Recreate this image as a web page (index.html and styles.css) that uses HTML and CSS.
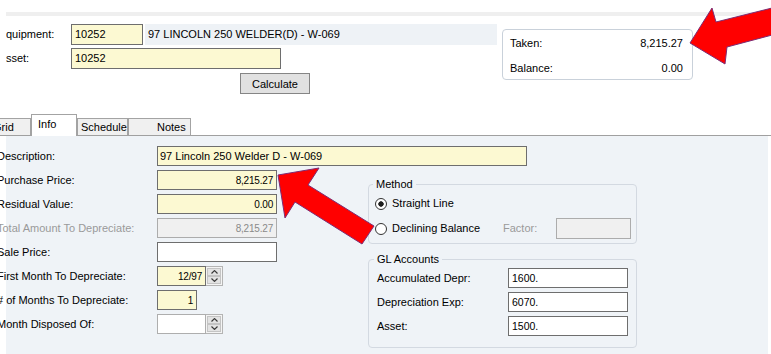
FILE: index.html
```html
<!DOCTYPE html>
<html>
<head>
<meta charset="utf-8">
<link rel="stylesheet" href="styles.css">
</head>
<body>
<div class="topband"></div>
<div class="header">
  <div class="hdr-left">
    <div class="hrow">
      <span class="hlabel">Equipment:</span>
      <div class="field yellow w72">10252</div>
      <div class="descband">97 LINCOLN 250 WELDER(D) - W-069</div>
    </div>
    <div class="hrow">
      <span class="hlabel">Asset:</span>
      <div class="field yellow w210">10252</div>
    </div>
    <div class="hrow btnrow">
      <button class="btn">Calculate</button>
    </div>
  </div>
  <div class="totals">
    <div class="trow"><span>Taken:</span><span>8,215.27</span></div>
    <div class="trow"><span>Balance:</span><span>0.00</span></div>
  </div>
</div>

<div class="tabs">
  <div class="tab tab-grid">Grid</div>
  <div class="tab tab-info active">Info</div>
  <div class="tab tab-sched">Schedule</div>
  <div class="tab tab-notes">Notes</div>
</div>

<div class="panel">
  <div class="lform">
    <span class="lbl">Description:</span>
    <div class="field yellow wdesc">97 Lincoln 250 Welder D - W-069</div>

    <span class="lbl">Purchase Price:</span>
    <div class="field yellow w120 num">8,215.27</div>

    <span class="lbl">Residual Value:</span>
    <div class="field yellow w120 num">0.00</div>

    <span class="lbl disabled">Total Amount To Depreciate:</span>
    <div class="field off w120 num">8,215.27</div>

    <span class="lbl">Sale Price:</span>
    <div class="field white w120 num"></div>

    <span class="lbl">First Month To Depreciate:</span>
    <div class="spin">
      <div class="field yellow w49 num">12/97</div>
      <div class="spinner">
        <div class="sbtn"><svg width="7" height="4" viewBox="0 0 7 4"><polyline points="0.5,3.5 3.5,0.6 6.5,3.5"/></svg></div>
        <div class="sbtn"><svg width="7" height="4" viewBox="0 0 7 4"><polyline points="0.5,0.5 3.5,3.4 6.5,0.5"/></svg></div>
      </div>
    </div>

    <span class="lbl"># of Months To Depreciate:</span>
    <div class="field yellow w40 num">1</div>

    <span class="lbl">Month Disposed Of:</span>
    <div class="spin">
      <div class="field light w49 num"></div>
      <div class="spinner">
        <div class="sbtn"><svg width="7" height="4" viewBox="0 0 7 4"><polyline points="0.5,3.5 3.5,0.6 6.5,3.5"/></svg></div>
        <div class="sbtn"><svg width="7" height="4" viewBox="0 0 7 4"><polyline points="0.5,0.5 3.5,3.4 6.5,0.5"/></svg></div>
      </div>
    </div>
  </div>

  <div class="rcol">
    <div class="group method">
      <span class="legend">Method</span>
      <div class="mrow first">
        <span class="radio checked"></span>
        <span>Straight Line</span>
      </div>
      <div class="mrow">
        <span class="radio"></span>
        <span class="decl">Declining Balance</span>
        <span class="factor">Factor:</span>
        <div class="field off wfactor"></div>
      </div>
    </div>

    <div class="group gl">
      <span class="legend">GL Accounts</span>
      <div class="grow first">
        <span class="glabel">Accumulated Depr:</span>
        <div class="field white w120 glnum">1600.</div>
      </div>
      <div class="grow">
        <span class="glabel">Depreciation Exp:</span>
        <div class="field white w120 glnum">6070.</div>
      </div>
      <div class="grow">
        <span class="glabel">Asset:</span>
        <div class="field white w120 glnum">1500.</div>
      </div>
    </div>
  </div>
</div>

<svg class="overlay" width="771" height="354" viewBox="0 0 771 354">
  <polygon class="arrow" points="690,43 712,8 716,22 776,7 776,34 727,47 725,64"/>
  <polygon class="arrow" points="278,175 319,168 308,185 374,226 362,244 295,202 285,218"/>
</svg>
</body>
</html>
```

FILE: styles.css
```css
html, body {
  margin: 0;
  padding: 0;
}

body {
  width: 771px;
  height: 354px;
  overflow: hidden;
  position: relative;
  background: #ffffff;
  color: #000;
  font-family: "Liberation Sans", Arial, sans-serif;
  font-size: 11px;
  line-height: 13px;
}

.topband {
  margin: 12px 0 0 6px;
  height: 4px;
  background: #efefef;
}

/* header */
.header {
  display: flex;
  padding-top: 8px;
  height: 70px;
}

.hdr-left {
  width: 497px;
  display: flex;
  flex-direction: column;
  gap: 3px;
}

.hrow {
  display: flex;
  align-items: center;
  height: 21px;
}

.btnrow {
  margin-top: 1px;
}

.hlabel {
  display: block;
  width: 65px;
  margin-left: 6px;
  overflow: hidden;
  text-indent: -7.4px;
  white-space: nowrap;
}

.field {
  box-sizing: border-box;
  height: 20px;
  border: 1px solid #6e6e6e;
  padding: 0 2px;
  display: flex;
  align-items: center;
  white-space: nowrap;
  overflow: hidden;
}

.hrow .field {
  height: 21px;
  padding: 0 3px;
}

.yellow { background: #fcf9d2; }
.white { background: #ffffff; }
.light { background: #ffffff; border-color: #aeaeae; }
.off { background: #f0f0f0; border-color: #acacac; color: #8a8a8a; }

.w72 { width: 72px; }
.w210 { width: 210px; }
.w120 { width: 120px; }
.w49 { width: 49px; }
.w40 { width: 40px; }
.wdesc { width: 370px; }
.wfactor { width: 75px; height: 21px; }

.num {
  justify-content: flex-end;
  padding-right: 3px;
  font-size: 10px;
  letter-spacing: -0.2px;
}

.descband {
  margin-left: 2px;
  width: 352px;
  height: 21px;
  box-sizing: border-box;
  background: #eef2f6;
  padding-left: 3px;
  display: flex;
  align-items: center;
  white-space: nowrap;
}

.btn {
  margin: 0 0 0 240px;
  width: 70px;
  height: 21px;
  box-sizing: border-box;
  border: 1px solid #858585;
  background: #e1e1e1;
  font-family: inherit;
  font-size: 11px;
  color: #000;
  padding: 0;
}

.totals {
  margin: 5px 0 0 5px;
  width: 191px;
  height: 51px;
  box-sizing: border-box;
  border: 1px solid #c9d1da;
  border-radius: 4px;
  padding: 5px 9px 0 7px;
  display: flex;
  flex-direction: column;
  gap: 9px;
}

.trow {
  display: flex;
  justify-content: space-between;
  align-items: center;
  height: 16px;
}

/* tabs */
.tabs {
  margin-top: 20px;
  height: 21px;
  border-bottom: 1px solid #a0a0a0;
  display: flex;
  align-items: flex-end;
}

.tab {
  box-sizing: border-box;
  height: 17px;
  border: 1px solid #a3a3a3;
  border-bottom: none;
  background: #f0f0f0;
  line-height: 16px;
  white-space: nowrap;
  overflow: hidden;
}

.tab.active {
  height: 22px;
  margin-bottom: -1px;
  background: #ffffff;
  padding-top: 2px;
  line-height: 14px;
}

.tab-grid { margin-left: -20px; width: 51px; padding-left: 12px; }
.tab-info { width: 46px; padding-left: 6px; }
.tab-sched { width: 51px; padding-left: 3px; }
.tab-notes { width: 63px; padding-left: 28px; }

/* panel */
.panel {
  margin-left: 6px;
  width: 762px;
  height: 218px;
  background: #eff3f7;
  display: flex;
}

.lform {
  margin-left: -9px;
  padding-top: 10px;
  display: grid;
  grid-template-columns: 160px 120px;
  grid-auto-rows: 20px;
  row-gap: 4px;
  align-items: center;
  align-content: start;
}

.lbl {
  white-space: nowrap;
}

.lbl.disabled {
  color: #9a9a9a;
}

.spin {
  display: flex;
  height: 20px;
}

.spinner {
  box-sizing: border-box;
  width: 17px;
  height: 20px;
  border: 1px solid #b4b4b4;
  border-left: none;
  background: #f4f4f4;
  padding: 1px;
  display: flex;
  flex-direction: column;
  gap: 0;
}

.sbtn {
  flex: 1;
  box-sizing: border-box;
  border: 1px solid #c4c4c4;
  background: #e3e3e3;
  display: flex;
  align-items: center;
  justify-content: center;
}

.sbtn svg polyline {
  fill: none;
  stroke: #3a3a3a;
  stroke-width: 1.2;
}

/* right column */
.rcol {
  margin-left: 91px;
  width: 269px;
  padding-top: 48px;
  display: flex;
  flex-direction: column;
  gap: 15px;
}

.group {
  box-sizing: border-box;
  border: 1px solid #d3d9e1;
  border-radius: 4px;
}

.method { height: 60px; }
.gl { height: 89px; }

.legend {
  display: block;
  width: max-content;
  margin-top: -8px;
  padding: 0 3px;
  line-height: 14px;
  background: #eff3f7;
  white-space: nowrap;
}

.method .legend { margin-left: 4px; }
.gl .legend { margin-left: 5px; }

.mrow {
  display: flex;
  align-items: center;
  height: 21px;
  padding-left: 6px;
  margin-top: 4px;
  white-space: nowrap;
}

.mrow.first { margin-top: 2px; }

.radio {
  box-sizing: border-box;
  width: 12px;
  height: 12px;
  border: 1px solid #333;
  border-radius: 50%;
  background: #fff;
  margin-right: 5px;
  flex: none;
}

.radio.checked {
  background: radial-gradient(circle, #1e1e1e 0 2.4px, #ffffff 3px);
}

.decl { width: 111px; }

.factor {
  width: 53px;
  color: #9a9a9a;
}

.grow {
  display: flex;
  align-items: center;
  height: 20px;
  padding-left: 8px;
  margin-top: 4px;
  white-space: nowrap;
}

.grow.first { margin-top: 2px; }

.glabel { width: 131px; }

.glnum {
  padding-left: 3px;
  font-size: 10.5px;
}

/* annotation arrows */
.overlay {
  position: absolute;
  left: 0;
  top: 0;
  pointer-events: none;
}

.arrow {
  fill: #ff0000;
  stroke: #7c2c74;
  stroke-width: 1;
  stroke-linejoin: miter;
}
```
